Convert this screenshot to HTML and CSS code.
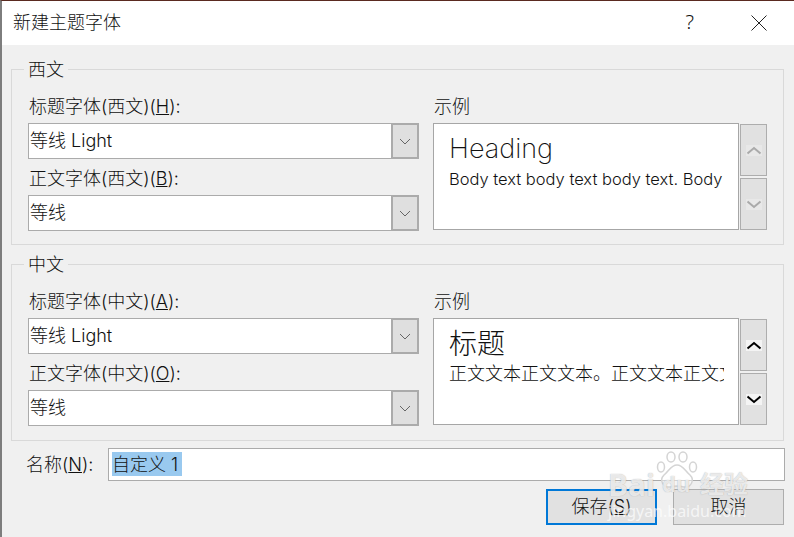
FILE: index.html
```html
<!DOCTYPE html>
<html lang="zh-CN">
<head>
<meta charset="utf-8">
<title>新建主题字体</title>
<link rel="stylesheet" href="styles.css">
</head>
<body>
<div class="dialog">
  <header class="titlebar">
    <span class="title">新建主题字体</span>
    <span class="help">?</span>
    <svg class="close" width="16" height="16" viewBox="0 0 16 16"><path d="M.5.5l15 15M15.500.5l-15 15" stroke="#222" fill="none"/></svg>
  </header>
  <section class="group first">
    <span class="legend">西文</span>
    <div class="fields">
      <label class="lbl">标题字体(西文)(<u>H</u>):</label>
      <div class="combo"><span class="val">等线 Light</span><span class="drop"><svg width="12" height="7" viewBox="0 0 12 7"><path d="M1 1l5 5 5-5" stroke="#666" fill="none"/></svg></span></div>
      <label class="lbl">正文字体(西文)(<u>B</u>):</label>
      <div class="combo"><span class="val">等线</span><span class="drop"><svg width="12" height="7" viewBox="0 0 12 7"><path d="M1 1l5 5 5-5" stroke="#666" fill="none"/></svg></span></div>
    </div>
    <div class="sample">
      <label class="lbl">示例</label>
      <div class="sample-row">
        <div class="preview"><div class="head latin">Heading</div><div class="body-text latin">Body text body text body text. Body</div></div>
        <div class="spin off">
          <span class="spin-btn"><svg width="16" height="11" viewBox="0 0 16 11"><rect width="16" height="11" fill="#e8e8e8"/><path d="M1.500 8.500L8 3l6.500 5.500" stroke="currentColor" stroke-width="2" fill="none"/></svg></span>
          <span class="spin-btn"><svg width="16" height="11" viewBox="0 0 16 11"><rect width="16" height="11" fill="#e8e8e8"/><path d="M1.500 2.500L8 8l6.500-5.500" stroke="currentColor" stroke-width="2" fill="none"/></svg></span>
        </div>
      </div>
    </div>
  </section>
  <section class="group second">
    <span class="legend">中文</span>
    <div class="fields">
      <label class="lbl">标题字体(中文)(<u>A</u>):</label>
      <div class="combo"><span class="val">等线 Light</span><span class="drop"><svg width="12" height="7" viewBox="0 0 12 7"><path d="M1 1l5 5 5-5" stroke="#666" fill="none"/></svg></span></div>
      <label class="lbl">正文字体(中文)(<u>O</u>):</label>
      <div class="combo"><span class="val">等线</span><span class="drop"><svg width="12" height="7" viewBox="0 0 12 7"><path d="M1 1l5 5 5-5" stroke="#666" fill="none"/></svg></span></div>
    </div>
    <div class="sample">
      <label class="lbl">示例</label>
      <div class="sample-row">
        <div class="preview"><div class="head cjk">标题</div><div class="body-text cjk-body"><span class="clip">正文文本正文文本。正文文本正文文本</span></div></div>
        <div class="spin">
          <span class="spin-btn"><svg width="16" height="11" viewBox="0 0 16 11"><rect width="16" height="11" fill="#f4f4f4"/><path d="M1.500 8.500L8 3l6.500 5.500" stroke="currentColor" stroke-width="2" fill="none"/></svg></span>
          <span class="spin-btn"><svg width="16" height="11" viewBox="0 0 16 11"><rect width="16" height="11" fill="#f4f4f4"/><path d="M1.500 2.500L8 8l6.500-5.500" stroke="currentColor" stroke-width="2" fill="none"/></svg></span>
        </div>
      </div>
    </div>
  </section>
  <div class="name-row">
    <label class="name-lbl">名称(<u>N</u>):</label>
    <div class="name-input"><span class="sel">自定义 1</span></div>
  </div>
  <div class="actions">
    <button class="btn primary">保存(<u>S</u>)</button>
    <button class="btn">取消</button>
  </div>
  <div class="watermark">
    <svg class="paw" width="44" height="44" viewBox="0 0 44 44"><g fill="rgba(255,255,255,.5)" stroke="#d4d4d4" stroke-width="1.500"><ellipse cx="5" cy="16" rx="3.500" ry="5"/><ellipse cx="15" cy="6" rx="4" ry="5"/><ellipse cx="27" cy="6" rx="4" ry="5"/><ellipse cx="37" cy="16" rx="3.500" ry="5"/><path d="M21 14c-6 0-8 6-13 10-5 5-1 13 6 12 4-1 10-1 14 0 7 1 11-7 6-12-5-4-7-10-13-10z"/></g></svg>
    <span class="wm-main">Bai</span>
    <span class="wm-du">du</span>
    <span class="wm-cn">经验</span>
    <span class="wm-sub">jingyan.baidu.com</span>
  </div>
</div>
</body>
</html>
```
FILE: styles.css
```css
* { box-sizing: border-box; }
html, body { margin: 0; height: 100%; }
body {
  width: 794px; height: 537px; overflow: hidden; background: #f0f0f0;
  font-family: "Inter", "Noto Sans CJK SC", "Noto Sans", sans-serif;
  font-size: 18px; font-weight: 300; color: #111;
}
.dialog {
  position: relative; width: 794px; height: 537px; overflow: hidden;
  display: flex; flex-direction: column;
  border-top: 1px solid #5a2a20; border-left: 2px solid #7d7d7d;
}
.titlebar {
  flex: none; height: 44px; background: #fff;
  display: flex; align-items: center; padding: 0 27px 0 11px;
}
.title { flex: 1; line-height: 44px; height: 44px; }
.help { font-size: 20px; margin-right: 57px; margin-bottom: 3px; font-family: "Noto Sans", sans-serif; }
.close { display: block; }
.group {
  position: relative; flex: none; width: 773px; margin-left: 9px;
  border: 1px solid #d9d9d9;
  display: flex; gap: 14px; padding: 17px 0 13px 16px;
}
.first { margin-top: 24px; height: 176px; }
.second { margin-top: 19px; height: 177px; }
.legend {
  position: absolute; left: 12px; top: -11px; padding: 0 4px; background: #f0f0f0;
  line-height: 22px;
}
.fields { width: 391px; display: flex; flex-direction: column; }
.lbl { display: block; height: 36px; padding-left: 1px; line-height: 40px; white-space: pre; }
.combo {
  height: 36px; background: #fff; border: 1px solid #ababab; display: flex;
}
.val { flex: 1; line-height: 34px; padding-left: 1px; white-space: pre; }
.drop {
  width: 28px; margin: -1px -1px -1px 0; background: #dfdfdf; border: 2px solid #ababab;
  display: flex; align-items: center; justify-content: center;
}
.sample { width: 334px; }
.sample-row { display: flex; gap: 1px; }
.preview { width: 306px; height: 107px; background: #fff; border: 1px solid #a6a6a6; padding: 5px 15px 0; overflow: hidden; }
.head { font-size: 27px; font-weight: 200; line-height: 40px; white-space: nowrap; }
.cjk { font-size: 28px; font-weight: 300; }
.body-text { line-height: 21px; white-space: nowrap; font-size: 16.500px; }
.cjk-body { font-size: 18px; line-height: 19px; }
.clip { display: block; width: 275px; overflow: hidden; }
.spin { width: 27px; padding-top: 1px; display: flex; flex-direction: column; gap: 2px; color: #000; }
.spin.off { color: #aaa; }
.spin-btn {
  height: 52px; background: #e1e1e1; border: 1px solid #adadad;
  display: flex; align-items: center; justify-content: center;
}
.name-row { flex: none; height: 33px; margin-top: 7px; display: flex; align-items: center; padding-left: 24px; }
.name-lbl { width: 82px; white-space: pre; line-height: 34px; height: 33px; }
.name-input { width: 677px; height: 33px; background: #fff; border: 1px solid #ababab; padding: 3px 0 0 3px; line-height: 24px; }
.sel { display: block; background: #99c9ef; height: 24px; width: 70px; white-space: pre; line-height: 26px; }
.actions { flex: none; margin-top: 8px; display: flex; gap: 16px; padding-left: 544px; }
.btn {
  width: 111px; height: 36px; background: #e1e1e1; border: 1px solid #adadad; padding: 0 0 4px;
  font: inherit; color: inherit;
}
.primary { border: 2px solid #0078d7; }
.watermark { position: absolute; left: 0; top: 0; width: 100%; height: 100%; pointer-events: none; }
.watermark span { position: absolute; white-space: nowrap; }
.paw { position: absolute; left: 654px; top: 450px; }
.wm-main, .wm-du, .wm-cn { color: rgba(255,255,255,.75); text-shadow: 0 0 1px rgba(130,130,130,.7); }
.wm-main { left: 606px; top: 466px; font: 700 30px/36px "Noto Sans", sans-serif; }
.wm-du { left: 660px; top: 469px; font: 700 22px/26px "Noto Sans", sans-serif; }
.wm-cn { left: 698px; top: 466px; font: 700 24px/32px "Noto Sans CJK SC", sans-serif; }
.wm-sub { left: 606px; top: 500px; color: rgba(255,255,255,.7); font: 400 16px/20px "Noto Sans", sans-serif; }
```
